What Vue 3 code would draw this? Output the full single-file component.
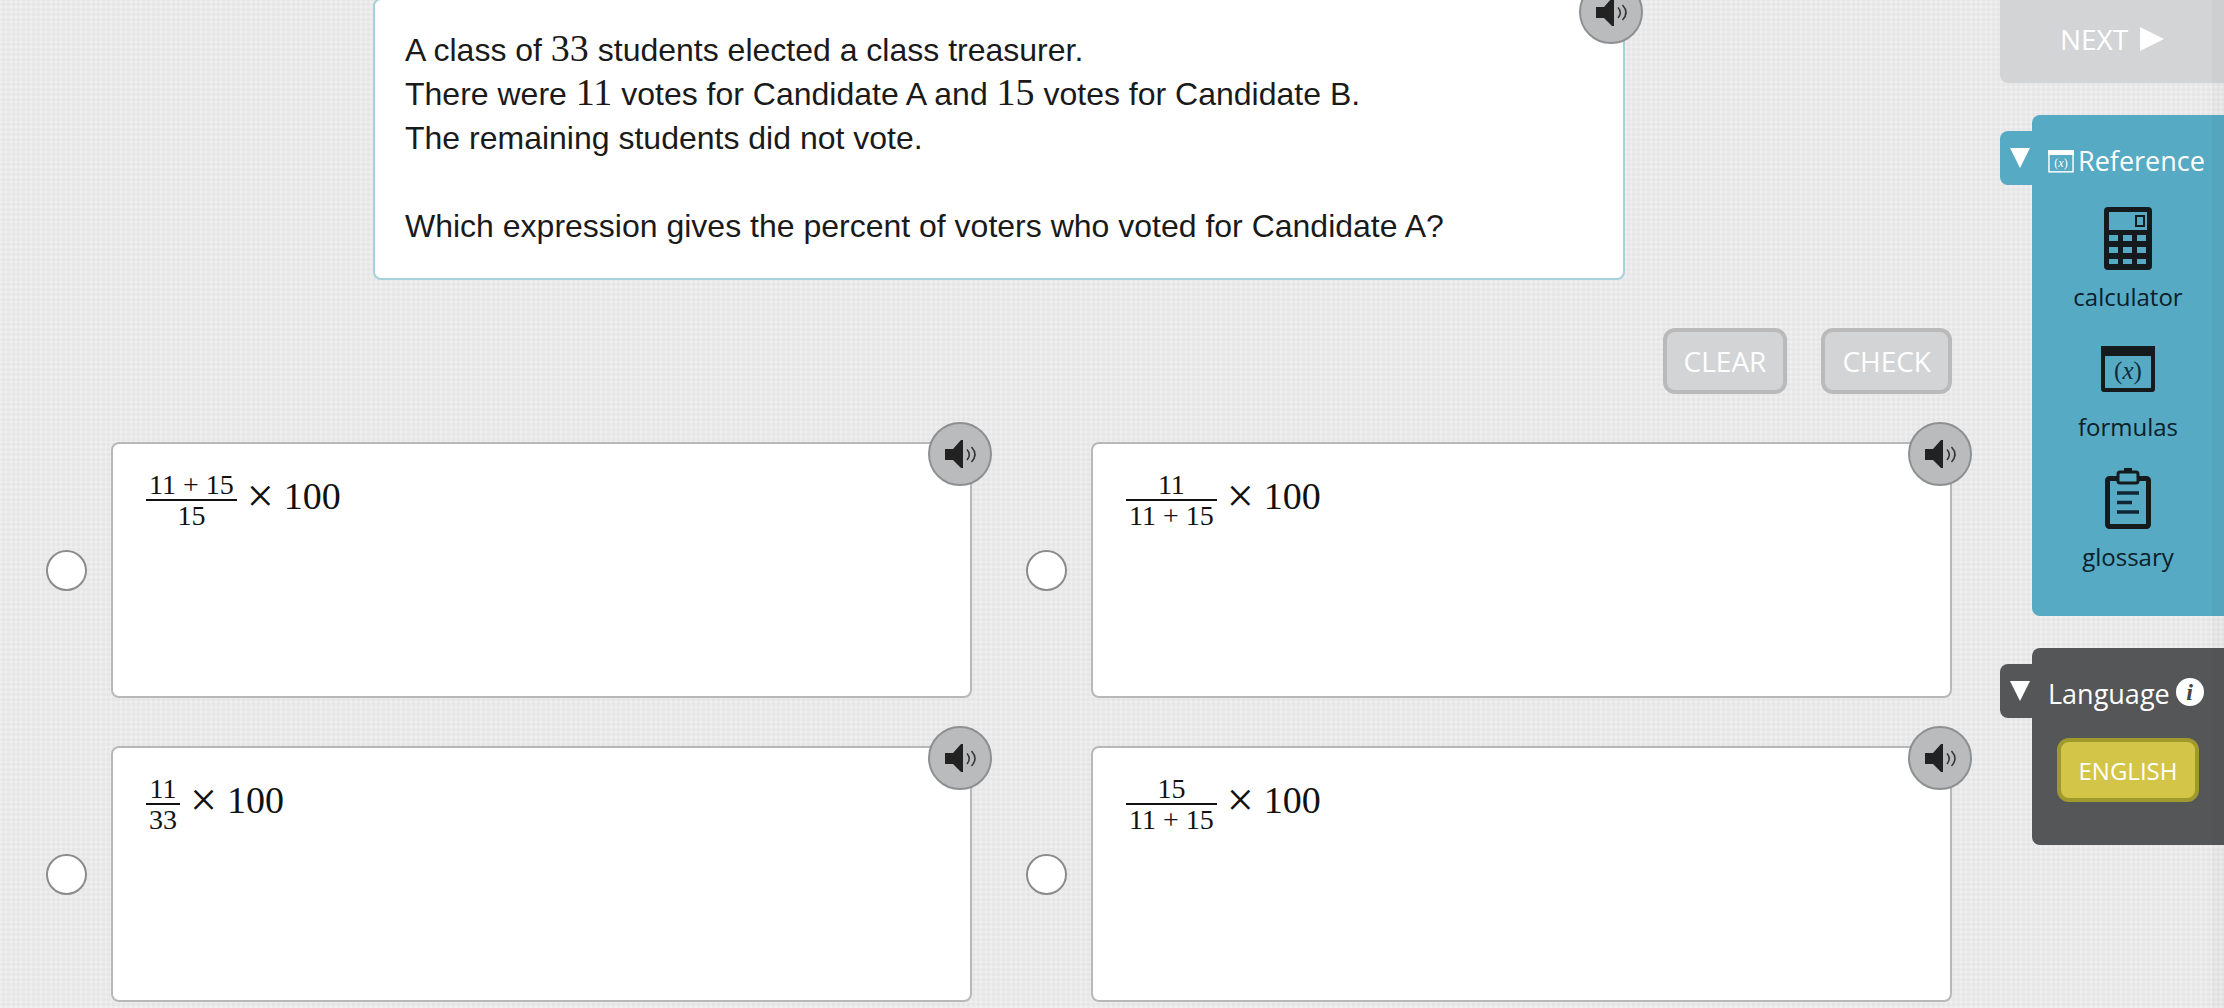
<script setup>
import { ref } from 'vue'

const picked = ref('')

const options = [
  { id: 'a', top: '11 + 15', bottom: '15' },
  { id: 'b', top: '11', bottom: '11 + 15' },
  { id: 'c', top: '11', bottom: '33' },
  { id: 'd', top: '15', bottom: '11 + 15' },
]
</script>

<template>
  <div class="page">
    <main class="main">
      <section class="question">
        <p>
          A class of <span class="num">33</span> students elected a class treasurer.<br />
          There were <span class="num">11</span> votes for Candidate A and <span class="num">15</span> votes for Candidate B.<br />
          The remaining students did not vote.
        </p>
        <p>Which expression gives the percent of voters who voted for Candidate A?</p>
        <button class="audio" type="button" aria-label="Listen to question">
          <svg viewBox="0 0 60 60" aria-hidden="true">
            <path d="M15 25h8l8-9h2v28h-2l-8-8h-8z" fill="#222" />
            <path d="M37 25.500q4.500 5 0 10.500M41.500 23q7 7.500 0 15" fill="none" stroke="#333" stroke-width="1.500" />
          </svg>
        </button>
      </section>

      <div class="actions">
        <button class="action" type="button">CLEAR</button>
        <button class="action" type="button">CHECK</button>
      </div>

      <div class="options" role="radiogroup" aria-label="Answers">
        <div v-for="o in options" :key="o.id" class="option">
          <input :id="'option-' + o.id" v-model="picked" type="radio" name="answer" :value="o.id" />
          <div class="answer">
            <label class="card" :for="'option-' + o.id">
              <span class="fraction">
                <span class="top">{{ o.top }}</span>
                <span class="bottom">{{ o.bottom }}</span>
              </span>
              <span class="times">×</span>
              <span>100</span>
            </label>
            <button class="audio" type="button" aria-label="Listen to answer">
              <svg viewBox="0 0 60 60" aria-hidden="true">
                <path d="M15 25h8l8-9h2v28h-2l-8-8h-8z" fill="#222" />
                <path d="M37 25.500q4.500 5 0 10.500M41.500 23q7 7.500 0 15" fill="none" stroke="#333" stroke-width="1.500" />
              </svg>
            </button>
          </div>
        </div>
      </div>
    </main>

    <aside class="side">
      <button class="next" type="button">
        NEXT
        <svg width="24" height="24" viewBox="0 0 24 24" aria-hidden="true"><path d="M0 0L24 12L0 24z" fill="#fff" /></svg>
      </button>

      <section class="group reference">
        <button class="tab" type="button" aria-label="Toggle reference">
          <svg width="20" height="20" viewBox="0 0 20 20" aria-hidden="true"><path d="M0 0H20L10 20z" fill="#fff" /></svg>
        </button>
        <div class="panel">
          <h2>
            <svg class="mini" width="26" height="23" viewBox="0 0 54 47" aria-hidden="true">
              <rect x="2" y="2" width="50" height="43" fill="none" stroke="#fff" stroke-width="3" />
              <rect width="54" height="10" fill="#fff" />
              <text x="27" y="34" text-anchor="middle" font-family="Liberation Serif, serif" font-size="25" fill="#fff">(<tspan font-style="italic">x</tspan>)</text>
            </svg>
            <span>Reference</span>
          </h2>
          <div class="tools">
            <button class="tool" type="button">
              <svg width="48" height="64" viewBox="0 0 48 64" aria-hidden="true">
                <path
                  fill="#151a1d"
                  fill-rule="evenodd"
                  d="M4 0h40a4 4 0 0 1 4 4v55a4 4 0 0 1-4 4h-40a4 4 0 0 1-4-4v-55a4 4 0 0 1 4-4zM5 5v18h38v-18zM5 28v6h9v-6zM19 28v6h9v-6zM33 28v6h9v-6zM5 40v6h9v-6zM19 40v6h9v-6zM33 40v6h9v-6zM5 52v5h9v-5zM19 52v5h9v-5zM33 52v5h9v-5z"
                />
                <rect x="32" y="9" width="8" height="10" fill="none" stroke="#151a1d" stroke-width="2" />
              </svg>
              calculator
            </button>
            <button class="tool" type="button">
              <svg width="54" height="64" viewBox="0 0 54 64" aria-hidden="true">
                <rect x="2" y="11" width="50" height="42" rx="1" fill="none" stroke="#151a1d" stroke-width="4" />
                <rect y="9" width="54" height="10" fill="#151a1d" />
                <text x="27" y="42" text-anchor="middle" font-family="Liberation Serif, serif" font-size="25" fill="#0d2a3c">(<tspan font-style="italic">x</tspan>)</text>
              </svg>
              formulas
            </button>
            <button class="tool" type="button">
              <svg width="48" height="64" viewBox="0 0 48 64" aria-hidden="true">
                <rect x="3.500" y="11.500" width="41" height="48" rx="2" fill="none" stroke="#151a1d" stroke-width="5" />
                <path d="M20 1h8v4h-8z" fill="#151a1d" />
                <rect x="14" y="5" width="20" height="11" rx="2" fill="#56aac3" stroke="#151a1d" stroke-width="3" />
                <path d="M13 26h22M13 35.500h15M13 45h22" stroke="#102733" stroke-width="3.500" />
              </svg>
              glossary
            </button>
          </div>
        </div>
      </section>

      <section class="group language">
        <button class="tab" type="button" aria-label="Toggle language">
          <svg width="20" height="20" viewBox="0 0 20 20" aria-hidden="true"><path d="M0 0H20L10 20z" fill="#fff" /></svg>
        </button>
        <div class="panel">
          <h2>
            <span>Language</span>
            <button class="info" type="button" aria-label="About language">i</button>
          </h2>
          <button class="english" type="button">ENGLISH</button>
        </div>
      </section>
    </aside>
    <div class="edge"></div>
  </div>
</template>

<style>
html,
body {
  margin: 0;
  background: #e8e8e8;
}
</style>

<style scoped>
* {
  box-sizing: border-box;
}
button {
  margin: 0;
  padding: 0;
  border: 0;
  background: none;
  font-family: 'Open Sans', 'Noto Sans', sans-serif;
  cursor: pointer;
}
svg {
  display: block;
}
.page {
  position: relative;
  display: flex;
  min-height: 100vh;
  overflow: hidden;
  background:
    repeating-linear-gradient(90deg, rgba(255, 255, 255, 0.2) 0 2px, transparent 2px 5px),
    repeating-linear-gradient(0deg, rgba(255, 255, 255, 0.2) 0 2px, transparent 2px 5px),
    #e6e6e6;
}
.main {
  flex: 1;
  min-width: 0;
  padding: 0 48px 6px 46px;
}
.question {
  position: relative;
  width: 1252px;
  max-width: 100%;
  margin: -2px auto 0;
  padding: 28px 30px 30px;
  border: 2px solid #a6d0da;
  border-radius: 8px;
  background: #fff;
  color: #1a1a1a;
  font: 32px/44px 'Liberation Sans', Arial, sans-serif;
}
.question p {
  margin: 0 0 44px;
}
.question p:last-of-type {
  margin: 0;
}
.num {
  font: 38px/1 'Liberation Serif', 'Times New Roman', serif;
}
.audio {
  position: absolute;
  top: -20px;
  right: -20px;
  width: 64px;
  height: 64px;
  border: 2px solid #8e8f91;
  border-radius: 50%;
  background: #babbbd;
}
.actions {
  display: flex;
  justify-content: flex-end;
  gap: 34px;
  margin: 48px 0;
}
.action {
  height: 66px;
  padding: 0 17px;
  border: 4px solid #bababa;
  border-radius: 12px;
  background: #d3d4d6;
  color: #fff;
  font-size: 28px;
  font-weight: 500;
  line-height: 36px;
}
.options {
  display: grid;
  grid-template-columns: 1fr 1fr;
  gap: 48px 54px;
}
.option {
  display: flex;
  align-items: center;
  gap: 24px;
}
.option input {
  appearance: none;
  flex: none;
  width: 41px;
  height: 41px;
  margin: 0;
  border: 2px solid #8b8b8b;
  border-radius: 50%;
  background: #fff;
}
.option input:checked {
  background: radial-gradient(#333 0 9px, #fff 10px);
}
.answer {
  position: relative;
  flex: 1;
}
.card {
  display: flex;
  align-items: flex-start;
  min-height: 256px;
  padding: 28px 33px;
  border: 2px solid #b8b8b8;
  border-radius: 8px;
  background: #fff;
  color: #111;
  font: 38px/48px 'Liberation Serif', 'Times New Roman', serif;
}
.fraction {
  display: flex;
  flex-direction: column;
  font-size: 28px;
  line-height: 26px;
  text-align: center;
}
.top {
  padding: 0 3px 1px;
  border-bottom: 2px solid #111;
}
.bottom {
  padding: 2px 3px 0;
}
.times {
  margin: 0 10px;
  font-size: 48px;
}
.side {
  display: flex;
  flex-direction: column;
  gap: 32px;
  flex: none;
  width: 224px;
}
.next {
  display: flex;
  align-items: center;
  justify-content: center;
  gap: 12px;
  height: 83px;
  padding-bottom: 6px;
  border-radius: 0 0 0 8px;
  background: #d3d4d6;
  color: #fff;
  font-size: 28px;
  font-weight: 500;
  line-height: 36px;
}
.group {
  display: flex;
  align-items: flex-start;
}
.tab {
  display: flex;
  align-items: center;
  justify-content: flex-end;
  width: 32px;
  height: 54px;
  margin-top: 16px;
  padding: 0 2px 0 0;
  border-radius: 8px 0 0 8px;
}
.panel {
  flex: 1;
  padding: 28px 0 43px;
  border-radius: 8px 0 0 8px;
}
.reference .tab,
.reference .panel {
  background: #56aac3;
}
.language .tab,
.language .panel {
  background: #555658;
}
h2 {
  display: flex;
  align-items: center;
  gap: 4px;
  margin: 0 0 28px;
  padding-left: 16px;
  color: #fff;
  font: 500 27px/36px 'Open Sans', 'Noto Sans', sans-serif;
}
.language h2 {
  gap: 6px;
  margin-bottom: 26px;
}
.tools {
  display: flex;
  flex-direction: column;
  gap: 24px;
}
.tool {
  display: flex;
  flex-direction: column;
  align-items: center;
  gap: 10px;
  color: #0b202b;
  font-size: 24px;
  font-weight: 500;
  line-height: 32px;
}
.info {
  width: 28px;
  height: 28px;
  margin-bottom: 4px;
  border-radius: 50%;
  background: #fff;
  color: #444;
  font: italic bold 24px/28px 'Liberation Serif', serif;
}
.english {
  display: block;
  width: 142px;
  height: 64px;
  margin: 0 auto;
  border: 4px solid #a09a2d;
  border-radius: 12px;
  background: #d3c548;
  color: #fff;
  font-size: 24px;
  font-weight: 500;
}
.edge {
  position: absolute;
  top: 0;
  right: 0;
  bottom: 0;
  width: 12px;
  background: rgba(0, 0, 0, 0.02);
  pointer-events: none;
}
</style>
